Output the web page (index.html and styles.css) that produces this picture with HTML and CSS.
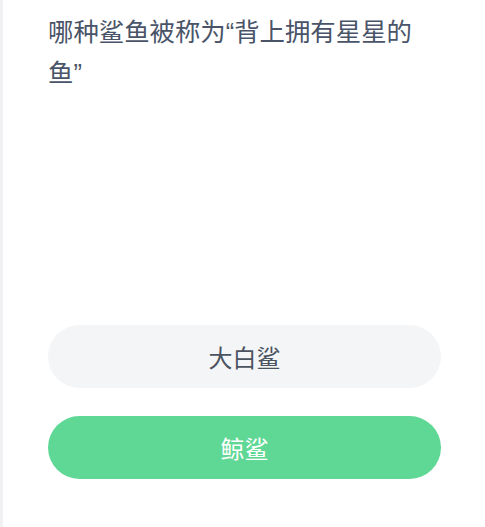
FILE: index.html
```html
<!DOCTYPE html>
<html lang="zh-CN">
<head>
<meta charset="utf-8">
<link rel="stylesheet" href="styles.css">
</head>
<body>
<div class="page">
  <p class="question">哪种鲨鱼被称为“背上拥有星星的鱼”</p>
  <div class="options">
    <div class="option">大白鲨</div>
    <div class="option option-correct">鲸鲨</div>
  </div>
</div>
</body>
</html>
```

FILE: styles.css
```css
html, body {
  margin: 0;
  padding: 0;
  background: #ffffff;
}
.page {
  box-sizing: border-box;
  height: 527px;
  border-left: 3px solid #f1f1f3;
  padding: 12px 44px 48px 45px;
  display: flex;
  flex-direction: column;
  font-family: "Noto Sans CJK SC", "Noto Sans", sans-serif;
}
.question {
  margin: 0;
  font-family: "Liberation Sans", "Noto Sans CJK SC", sans-serif;
  font-size: 25.4px;
  line-height: 41px;
  color: #4a5468;
}
.options {
  margin-top: auto;
  display: flex;
  flex-direction: column;
  gap: 28px;
}
.option {
  height: 63px;
  border-radius: 32px;
  background: #f4f5f7;
  color: #4b5361;
  font-size: 24px;
  display: flex;
  align-items: center;
  justify-content: center;
}
.option-correct {
  background: #5fd795;
  color: #ffffff;
}
```
